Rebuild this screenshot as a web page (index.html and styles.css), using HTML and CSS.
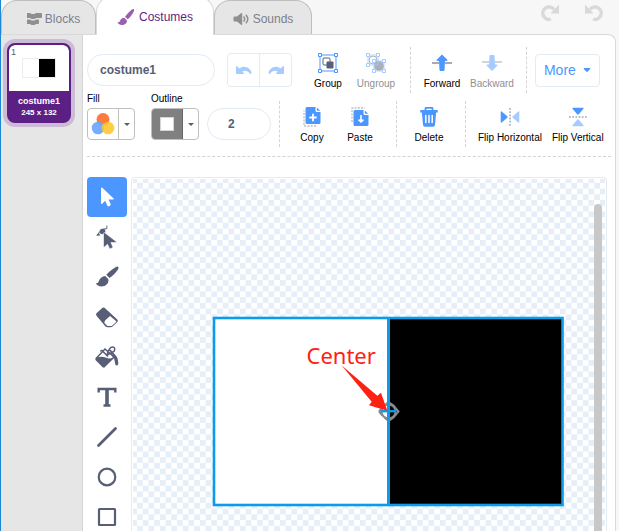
FILE: index.html
```html
<!DOCTYPE html>
<html lang="en">
<head>
<meta charset="utf-8">
<meta name="viewport" content="width=device-width, initial-scale=1">
<title>Costume editor</title>
<link rel="stylesheet" href="styles.css">
</head>
<body>
<header class="topbar">
  <nav class="tabs">
    <button class="tab" type="button">
      <svg class="tab-icon" width="18" height="14" viewBox="0 0 18 14" fill="#8f8f8f"><path d="M2 1h3l1.500 1h3L11 1h5q1 0 1 1v3q0 1-1 1h-5L9.500 7h-3L5 6H2z"/><path d="M2 7.500h3l1.500 1h3l1.500-1h2q1 0 1 1V11q0 1-1 1h-2l-1.500 1h-3L5 12H2z"/></svg>
      Blocks
    </button>
    <button class="tab tab-active" type="button">
      <svg class="tab-icon" width="18" height="18" viewBox="0 0 20 20" fill="#9a5fae"><path d="M18.500 1.200c.8.600.6 1.500.1 2.600-1.500 3.200-4 6.500-6.700 8.700l-3-2.700C11.200 6.600 14 3.600 16.600 1.600c.7-.5 1.300-.8 1.900-.4z"/><path d="M8 10.800l2.900 2.700c.6 3.500-2.400 5.300-5.400 5.300-2.300 0-4.200-1.200-5-3.100 1.300.5 2.400.1 2.800-1.300.6-2 2.300-3.500 4.700-3.600z"/></svg>
      Costumes
    </button>
    <button class="tab" type="button">
      <svg class="tab-icon" width="17" height="14" viewBox="0 0 17 14" fill="#8f8f8f"><path d="M1.500 4.500H4L8 1.200q1.200-.8 1.200.6v10.400q0 1.400-1.200.6L4 9.500H1.500Q.5 9.500.5 8.500v-3q0-1 1-1z"/><path d="M11 5q1.300 2 0 4M13.300 3.200q3 3.800 0 7.600" fill="none" stroke="#8f8f8f" stroke-width="1.500" stroke-linecap="round"/></svg>
      Sounds
    </button>
  </nav>
  <div class="history">
    <button class="plain" type="button" aria-label="Redo block change"><svg width="20" height="20" viewBox="0 0 20 20"><path d="M14 6.500A6.200 6.200 0 1 0 11 16" fill="none" stroke="#d9d9d9" stroke-width="3.400"/><path d="M19 1.500v9h-8.500z" fill="#d9d9d9"/></svg></button>
    <button class="plain" type="button" aria-label="Undo block change"><svg width="20" height="20" viewBox="0 0 20 20"><path d="M6 6.500A6.200 6.200 0 1 1 9 16" fill="none" stroke="#d9d9d9" stroke-width="3.400"/><path d="M1 1.500v9h8.500z" fill="#d9d9d9"/></svg></button>
  </div>
</header>

<main class="panel">
  <aside class="assets">
    <button class="asset" type="button">
      <span class="asset-preview">
        <span class="asset-index">1</span>
        <svg width="34" height="20" viewBox="0 0 34 20"><rect x=".5" y=".5" width="33" height="19" fill="#fff" stroke="#ececec"/><rect x="17" y="1" width="16" height="18"/></svg>
      </span>
      <span class="asset-name">costume1</span>
      <span class="asset-size">245 x 132</span>
    </button>
  </aside>

  <section class="editor">
    <div class="toolbar">
      <div class="row">
        <input class="field name" type="text" value="costume1" aria-label="Costume">
        <div class="pair">
          <button class="pair-btn" type="button" aria-label="Undo"><svg width="20" height="20" viewBox="0 0 20 20" fill="#a5cbff"><path d="M2.600 6q-.6-.6-.6.300V13q0 1 1 1h6.600q1 0 .3-.8L8.300 11.600C11 10 14 10.800 15.600 13.400q1.400 1.400 1.800-.6C17 8.500 10.500 4.300 5.500 8.500z"/></svg></button>
          <button class="pair-btn" type="button" aria-label="Redo"><svg width="20" height="20" viewBox="0 0 20 20" fill="#a5cbff"><path d="M17.400 6q.6-.6.600.3V13q0 1-1 1h-6.600q-1 0-.3-.8l1.600-1.600C9 10 6 10.800 4.400 13.400q-1.400 1.400-1.800-.6C3 8.500 9.500 4.300 14.500 8.500z"/></svg></button>
        </div>
        <div class="actions">
          <button class="action" type="button">
            <svg width="20" height="20" viewBox="0 0 20 20"><rect x="5" y="5" width="7" height="7" rx="1" fill="#fff" stroke="#575e75"/><rect x="8.500" y="8.500" width="7" height="7" rx="1" fill="#575e75"/><rect x="2" y="2" width="16" height="16" fill="none" stroke="#4c97ff"/><g fill="#fff" stroke="#4c97ff"><path d="M.5.500h3v3h-3zM16.500.500h3v3h-3zM.5 16.500h3v3h-3zM16.500 16.500h3v3h-3z"/></g></svg>
            Group
          </button>
          <button class="action" type="button" disabled>
            <svg width="20" height="20" viewBox="0 0 20 20"><circle cx="7" cy="7" r="4" fill="none" stroke="#abafba"/><circle cx="13" cy="13" r="5" fill="#abafba"/><path d="M2 2h10v10H2zM8 8h10v10H8z" fill="none" stroke="#a5cbff" stroke-width=".8"/><g fill="#fff" stroke="#a5cbff"><path d="M.5.500h3v3h-3zM10.500.500h3v3h-3zM.5 10.500h3v3h-3zM6.500 6.500h3v3h-3zM16.500 6.500h3v3h-3zM6.500 16.500h3v3h-3zM16.500 16.500h3v3h-3z"/></g></svg>
            Ungroup
          </button>
        </div>
        <div class="actions divided">
          <button class="action" type="button">
            <svg width="20" height="20" viewBox="0 0 20 20"><path d="M0 10h7M13 10h7" stroke="#8a8ea0" stroke-width="1.400"/><path d="M10 1.500l5.300 5.200q.6 1.300-.8 1.300H13l-.5 9q0 1-1 1h-3q-1 0-1-1L7 8H5.500q-1.400 0-.8-1.300z" fill="#4c97ff"/></svg>
            Forward
          </button>
          <button class="action" type="button" disabled>
            <svg width="20" height="20" viewBox="0 0 20 20"><path d="M0 9h7M13 9h7" stroke="#c3c6cf" stroke-width="1.400"/><path d="M10 18l5.300-5.200q.6-1.300-.8-1.300H13L12.500 3q0-1-1-1h-3q-1 0-1 1L7 11.500H5.500q-1.400 0-.8 1.300z" fill="#a5cbff"/></svg>
            Backward
          </button>
        </div>
        <button class="more" type="button">More
          <svg width="8" height="6" viewBox="0 0 10 6"><path d="M1.500.500h7q1.200.1.500 1.200L6 5q-1 .8-2 0L1 1.700Q.3.600 1.500.500z" fill="#4c97ff"/></svg>
        </button>
      </div>

      <div class="row row-lower">
        <div class="swatch-group">
          <span class="swatch-label" id="fill-label">Fill</span>
          <button class="swatch" type="button" aria-labelledby="fill-label">
            <span class="swatch-color"><svg width="24" height="24" viewBox="0 0 24 24"><circle cx="12" cy="7.500" r="6.500" fill="#ff7b3d"/><circle cx="7" cy="16" r="6.300" fill="#6ba8ff" fill-opacity=".93"/><circle cx="17" cy="16" r="6.300" fill="#ffc72b" fill-opacity=".88"/></svg></span>
            <span class="swatch-caret"></span>
          </button>
        </div>
        <div class="swatch-group">
          <span class="swatch-label" id="outline-label">Outline</span>
          <button class="swatch" type="button" aria-labelledby="outline-label">
            <span class="swatch-color swatch-outline"><span class="swatch-hole"></span></span>
            <span class="swatch-caret"></span>
          </button>
        </div>
        <input class="field width" type="text" inputmode="numeric" value="2" aria-label="Outline width">
        <div class="actions divided-start">
          <button class="action" type="button">
            <svg width="20" height="20" viewBox="0 0 20 20"><path d="M14 19H2V3.500" fill="none" stroke="#b9bcc6" stroke-width="1.300" stroke-dasharray="2 1.300"/><path d="M5 0h8.500v3.500q0 1.500 1.500 1.500h3.500v10.500q0 1.500-1.500 1.500H5q-1.500 0-1.500-1.500v-14Q3.500 0 5 0z" fill="#4c97ff"/><path d="M14.800.500l3.400 3.300h-2.400q-1 0-1-1z" fill="#4c97ff"/><path d="M11 7.500v6M8 10.500h6" stroke="#fff" stroke-width="1.800" stroke-linecap="round"/></svg>
            Copy
          </button>
          <button class="action" type="button">
            <svg width="20" height="20" viewBox="0 0 20 20"><path d="M2 15V1h13" fill="none" stroke="#b9bcc6" stroke-width="1.300" stroke-dasharray="2 1.300"/><path d="M5 3h8.500v3.500Q13.500 8 15 8h3.500v9.500q0 1.500-1.500 1.500H5q-1.500 0-1.500-1.500v-13Q3.500 3 5 3z" fill="#4c97ff"/><path d="M14.800 3.500l3.400 3.300h-2.400q-1 0-1-1z" fill="#4c97ff"/><path d="M10.200 8.500q.8-1.400 1.600 0v4h1.700q.8.200.3.900L11 16l-2.800-2.600q-.5-.7.300-.9h1.700z" fill="#fff"/></svg>
            Paste
          </button>
        </div>
        <div class="actions divided-start">
          <button class="action" type="button">
            <svg width="20" height="20" viewBox="0 0 20 20"><path d="M6.500 3V1.500Q6.500.8 7.200.800h5.600q.7 0 .7.700V3" fill="none" stroke="#4c97ff" stroke-width="1.800"/><path d="M1.800 3h16.400q.6 0 .6.700v1.800H1.200V3.700Q1.200 3 1.800 3zM2.800 5h14.400L16 18q-.2 1.700-2 1.700H6q-1.800 0-2-1.700z" fill="#4c97ff"/><path d="M6.800 8.500v7M10 8.500v7M13.200 8.500v7" stroke="#fff" stroke-width="1.500" stroke-linecap="round"/></svg>
            Delete
          </button>
        </div>
        <div class="actions divided-start">
          <button class="action" type="button">
            <svg width="20" height="20" viewBox="0 0 20 20"><path d="M10 1v18" stroke="#a9acb8" stroke-width="1.600" stroke-dasharray="1.800 1.400"/><path d="M.7 5v10q0 1 1 .5L7.300 10.800q.8-.8 0-1.600L1.700 4.500q-1-.5-1 .5z" fill="#4c97ff"/><path d="M19.300 5v10q0 1-1 .5l-5.600-4.700q-.8-.8 0-1.600l5.600-4.700q1-.5 1 .5z" fill="#a5cbff"/></svg>
            Flip Horizontal
          </button>
          <button class="action" type="button">
            <svg width="20" height="20" viewBox="0 0 20 20"><path d="M1 10h18" stroke="#a9acb8" stroke-width="1.600" stroke-dasharray="1.800 1.400"/><path d="M5 .7h10q1 0 .5 1l-4.700 5.600q-.8.800-1.600 0L4.500 1.700q-.5-1 .5-1z" fill="#4c97ff"/><path d="M5 19.300h10q1 0 .5-1l-4.700-5.600q-.8-.8-1.600 0l-4.700 5.600q-.5 1 .5 1z" fill="#a5cbff"/></svg>
            Flip Vertical
          </button>
        </div>
      </div>
    </div>

    <div class="workspace">
      <div class="tools">
        <button class="tool tool-active" type="button" aria-label="Select"><svg width="24" height="24" viewBox="0 0 24 24" fill="#fff"><path d="M6 3.300v15.200q.3 1 1.200.3l3-3 2.200 5q.4.900 1.300.5l1.500-.7q.8-.4.500-1.300l-2.100-4.700h4.500q1.300-.3.500-1.200L7.300 2.700Q6.200 2 6 3.300z"/></svg></button>
        <button class="tool" type="button" aria-label="Reshape"><svg width="24" height="24" viewBox="0 0 24 24"><path d="M2.500 10.500Q5 4.500 11.500 3.500M11.800.500V4" fill="none" stroke="#8a8ea0" stroke-width="1.300"/><path d="M1 10.500h4.500L3.500 8z" fill="#575e75"/><circle cx="7.500" cy="6.500" r="2.800" fill="#575e75"/><path d="M8.500 8.500v13q.3 1 1.200.3l2.800-2.600 1.900 4q.4.800 1.200.4l1.600-.7q.8-.4.500-1.300l-1.800-4h4.700q1.300-.3.500-1.200L9.800 7.800q-1.100-.6-1.300.7z" fill="#575e75" stroke="#fff" stroke-width=".6"/></svg></button>
        <button class="tool" type="button" aria-label="Brush"><svg width="24" height="24" viewBox="0 0 24 24" fill="#575e75"><path d="M23.200 2c.7.700.3 1.700-.4 2.700-2 3.200-5.100 6.200-8.300 8.200l-3.200-3.200c2.800-3.100 6.200-5.900 9.300-7.500 1-.5 1.900-.9 2.600-.2z"/><path d="M10.200 11l3 3c1.300 4.300-2.600 7.500-6.700 7.500-2.700 0-4.800-1.200-5.700-3.500 1.700.5 2.600-.3 3.200-2.200.9-2.700 3.300-4.500 6.200-4.800z"/></svg></button>
        <button class="tool" type="button" aria-label="Eraser"><svg width="24" height="24" viewBox="0 0 24 24"><path d="M1.500 8.300l6-5.500q1-.8 2 0L22.300 14.500q1.200 1.200 0 2.400L18 21q-1.200 1.200-2.500 1.200h-3q-1 0-2-.8L1.500 10.800q-1-1.200 0-2.500z" fill="#575e75"/><path d="M10.300 15.200l4.700-4.200 6 5q.5.600-.1 1.200l-3.600 3.200q-.7.600-1.500.6h-2.700q-.7 0-1.200-.5l-2-2q-.8-.8-.4-1.700z" fill="#fff"/></svg></button>
        <button class="tool" type="button" aria-label="Fill"><svg width="24" height="24" viewBox="0 0 24 24"><path d="M1.500 13L10 4l9 8-9.300 9.300q-1 .8-2 0L1.500 15q-.8-1 0-2z" fill="#fff" stroke="#575e75" stroke-width="1.500"/><path d="M1.500 12.500q5-1.500 9 0t8 .5l-9 8.300q-1 .8-2 0L1.500 15q-.8-1.200 0-2.500z" fill="#575e75"/><path d="M5.500 6.500q1-2 2.500 0l5 5M12 10q2-8 5.500-8t1.500 4.500l-8 4M14 4.500q4 2.500 5.500 7" fill="none" stroke="#575e75" stroke-width="1.500"/><path d="M18 8q5 3 5.300 9.500.1 3-1.600 3t-1.700-2.700q0-4-2.700-6.800z" fill="#575e75"/></svg></button>
        <button class="tool" type="button" aria-label="Text"><svg width="24" height="24" viewBox="0 0 24 24"><path d="M3.700 7.500V4h16.600v3.500M8.500 20.500h7" fill="none" stroke="#575e75" stroke-width="2.400"/><path d="M12 4v17" stroke="#575e75" stroke-width="3.600"/></svg></button>
        <button class="tool" type="button" aria-label="Line"><svg width="24" height="24" viewBox="0 0 24 24"><path d="M3.500 20.500l17-17" stroke="#575e75" stroke-width="2.800" stroke-linecap="round"/></svg></button>
        <button class="tool" type="button" aria-label="Circle"><svg width="24" height="24" viewBox="0 0 24 24"><circle cx="12" cy="12" r="8.300" fill="none" stroke="#575e75" stroke-width="2.200"/></svg></button>
        <button class="tool" type="button" aria-label="Rectangle"><svg width="24" height="24" viewBox="0 0 24 24"><rect x="4" y="4" width="16" height="16" rx=".5" fill="none" stroke="#575e75" stroke-width="2.200"/></svg></button>
      </div>
      <div class="canvas">
        <svg class="artboard" width="100%" height="100%">
          <defs>
            <pattern id="checks" x="255.500" y="232.500" width="11.430" height="11.430" patternUnits="userSpaceOnUse">
              <rect width="5.715" height="5.715" fill="#e6eef8"/>
              <rect x="5.715" y="5.715" width="5.715" height="5.715" fill="#e6eef8"/>
            </pattern>
          </defs>
          <rect width="100%" height="100%" fill="url(#checks)"/>
          <g transform="translate(255.500 232.500)">
            <rect x="-174.500" y="-93.500" width="174.500" height="187" fill="#fff"/>
            <rect x="0" y="-93.500" width="174" height="187" fill="#000"/>
            <g fill="none" stroke="#8a8a8a" stroke-width="2"><circle r="7"/><path d="M-9.500 0L-6-4M-9.500 0L-6 4M0-9.500L-4-6M0-9.500L5-6L10 0L5 6L0 9.500L-4 6"/></g>
            <rect x="-174.500" y="-93.500" width="348.500" height="187" fill="none" stroke="#0a9bea" stroke-width="2.600"/>
            <path d="M0-93V93" stroke="#0a9bea" stroke-width="3"/>
            <path d="M-8-.3H8" stroke="#0a9bea" stroke-width="2.400"/>
            <path d="M-47-46.200L-11.200-15.800-7.500-18.800-1.200-.8-19.500-6.200-16.800-9.800z" fill="#ff2014"/>
            <text class="note" x="-82" y="-48">Center</text>
          </g>
        </svg>
        <div class="scroll-thumb"></div>
      </div>
    </div>
  </section>
</main>
</body>
</html>
```
FILE: styles.css
```css
* {
  box-sizing: border-box;
}

body {
  margin: 0;
  height: 100vh;
  display: flex;
  flex-direction: column;
  overflow: hidden;
  border-left: 1px solid #1c86d8;
  background: #f7f7f7;
  font-family: "Liberation Sans", Arial, sans-serif;
  font-size: 12px;
  color: #575e75;
}

button,
input {
  font: inherit;
  color: inherit;
  margin: 0;
}

button {
  padding: 0;
  border: 0;
  background: none;
}

svg {
  display: block;
  flex: none;
}

.topbar {
  display: flex;
  justify-content: space-between;
  flex: none;
  height: 34px;
}

.tabs {
  display: flex;
}

.tab {
  display: flex;
  align-items: center;
  justify-content: center;
  gap: 3px;
  width: 98px;
  padding-top: 2px;
  border: 1px solid #bfbfbf;
  border-bottom: 0;
  border-radius: 16px 16px 0 0;
  background: #e6e6e6;
  color: #7b7f8c;
}

.tab:first-child {
  width: 95px;
  padding-left: 8px;
  gap: 2px;
}

.tab-active {
  position: relative;
  z-index: 1;
  gap: 4px;
  width: 118px;
  margin-top: -4px;
  margin-bottom: -1px;
  border-color: #d9d9d9;
  background: #fff;
  color: #5c1f84;
}

.history {
  display: flex;
  gap: 24px;
  padding: 3px 15px 0 0;
  align-items: flex-start;
}

.panel {
  display: flex;
  flex: 1;
  min-height: 0;
  margin-right: 3px;
  border: 1px solid #d9d9d9;
  border-left: 0;
  border-bottom: 0;
  border-radius: 0 8px 0 0;
  background: #fff;
}

.assets {
  flex: none;
  width: 82px;
  padding: 8px 6px;
  border-right: 1px solid #d4d4d4;
  background: #e6e6e6;
}

.asset {
  display: flex;
  flex-direction: column;
  align-items: center;
  width: 64px;
  height: 80px;
  overflow: hidden;
  border: 2px solid #5c1f84;
  border-radius: 8px;
  background: #5c1f84;
  box-shadow: 0 0 0 4px #cbbbd4;
  color: #fff;
  font-weight: bold;
}

.asset-preview {
  position: relative;
  display: flex;
  align-items: center;
  justify-content: center;
  width: 100%;
  height: 46px;
  margin-bottom: 4px;
  border-radius: 6px 6px 0 0;
  background: #fff;
}

.asset-index {
  position: absolute;
  top: 2px;
  left: 2px;
  color: #575e75;
  font-size: 9px;
  font-weight: normal;
}

.asset-name {
  font-size: 9px;
  line-height: 12px;
}

.asset-size {
  font-size: 8px;
  line-height: 12px;
}

.editor {
  display: flex;
  flex: 1;
  flex-direction: column;
  min-width: 0;
  padding: 12px 4px 0;
}

.toolbar {
  flex: none;
  padding-bottom: 9px;
  border-bottom: 1px dashed #d4d4d4;
}

.row {
  display: flex;
  align-items: center;
  height: 46px;
}

.row-lower {
  align-items: flex-end;
  height: 54px;
}

.field {
  height: 32px;
  border: 1px solid #e3ebf3;
  border-radius: 16px;
  background: #fff;
  outline: 0;
  font-weight: bold;
}

.name {
  width: 128px;
  padding: 0 12px;
}

.width {
  width: 64px;
  margin: 0 8px 7px 0;
  padding: 0 20px;
}

.pair {
  display: flex;
  width: 65px;
  height: 34px;
  margin: 0 16px 0 12px;
  border: 1px solid #e3ebf3;
  border-radius: 4px;
}

.pair-btn {
  display: flex;
  flex: 1;
  align-items: center;
  justify-content: center;
}

.pair-btn + .pair-btn {
  border-left: 1px solid #e3ebf3;
}

.actions {
  display: flex;
  align-items: center;
  gap: 8px;
  height: 46px;
}

.divided {
  margin-left: 14px;
  padding: 0 12px 0 11px;
  border: dashed #d4d4d4;
  border-width: 0 1px;
}

.divided-start {
  padding: 0 16px 0 12px;
  border-left: 1px dashed #d4d4d4;
}

.divided-start:last-child {
  gap: 10px;
  padding-right: 0;
}

.action {
  display: flex;
  flex-direction: column;
  align-items: center;
  gap: 5px;
  min-width: 40px;
  padding-top: 3px;
  color: #000;
  font-size: 10px;
  line-height: 12px;
  white-space: nowrap;
}

.action:disabled {
  color: #8f8f8f;
}

.more {
  display: flex;
  align-items: center;
  justify-content: center;
  gap: 7px;
  width: 65px;
  height: 33px;
  margin-left: 8px;
  border: 1px solid #e3ebf3;
  border-radius: 4px;
  color: #4c97ff;
  font-size: 14px;
}

.swatch-group {
  display: flex;
  flex-direction: column;
  gap: 3px;
  margin: 0 16px 7px 0;
}

.swatch-group + .swatch-group {
  margin-right: 8px;
}

.swatch-label {
  color: #000;
  font-size: 10px;
  line-height: 12px;
}

.swatch {
  display: flex;
  width: 48px;
  height: 32px;
  overflow: hidden;
  border: 1px solid #bfbfbf;
  border-radius: 4px;
}

.swatch-color {
  display: flex;
  align-items: center;
  justify-content: center;
  width: 31px;
  height: 100%;
  border-right: 1px solid #bfbfbf;
}

.swatch-outline {
  background: #808080;
  border-color: #666;
}

.swatch-hole {
  width: 14px;
  height: 14px;
  border: 1px solid #d4d4d4;
  background: #fff;
}

.swatch-caret {
  align-self: center;
  margin-left: 5px;
  border: solid transparent;
  border-width: 3px 3px 0;
  border-top-color: #575e75;
}

.workspace {
  display: flex;
  flex: 1;
  gap: 4px;
  min-height: 0;
  padding: 20px 4px 0 0;
}

.tools {
  flex: none;
  width: 40px;
}

.tool {
  display: flex;
  align-items: center;
  justify-content: center;
  width: 40px;
  height: 40px;
  border-radius: 4px;
}

.tool-active {
  background: #4c97ff;
}

.canvas {
  position: relative;
  flex: 1;
  min-width: 0;
  padding: 1px 1px 0;
  overflow: hidden;
  border: 1px solid #e3ebf3;
  border-bottom: 0;
  border-radius: 4px 4px 0 0;
}

.scroll-thumb {
  position: absolute;
  top: 26px;
  right: 4px;
  bottom: -8px;
  width: 8px;
  border-radius: 4px;
  background: #c8c8c8;
}

.note {
  fill: #ff2014;
  font-family: "Noto Sans", sans-serif;
  font-size: 22px;
}
```
